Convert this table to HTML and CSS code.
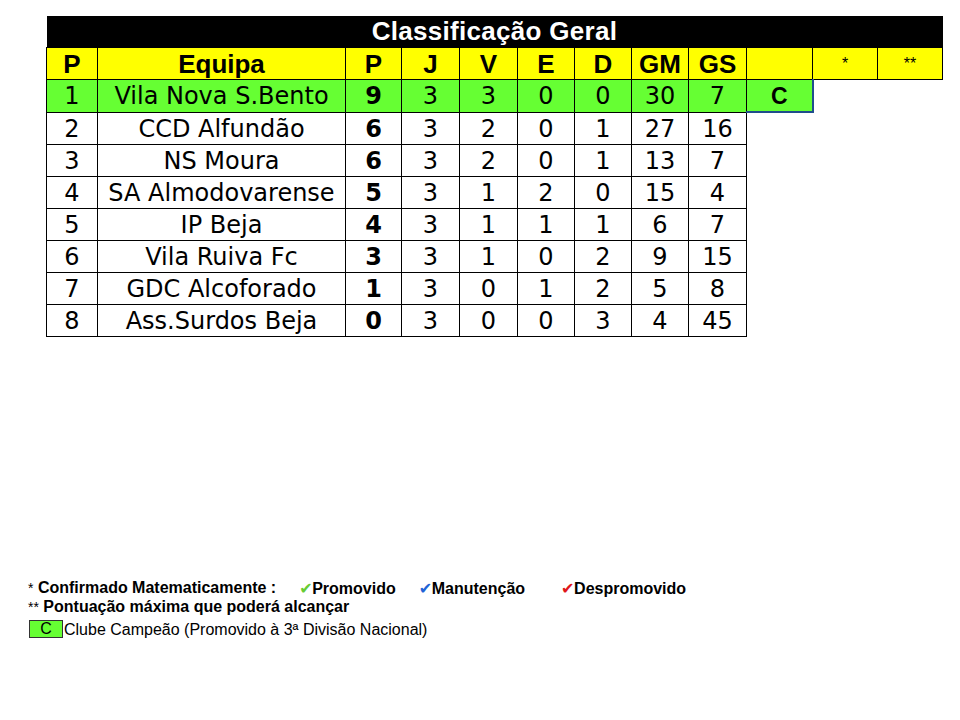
FILE: index.html
```html
<!DOCTYPE html>
<html lang="pt">
<head>
<meta charset="utf-8">
<title>Classificação Geral</title>
<link rel="stylesheet" href="styles.css">
</head>
<body>
<table class="standings">
  <colgroup>
    <col class="c-pos"><col class="c-team"><col class="c-pts"><col class="c-j"><col class="c-v"><col class="c-e"><col class="c-d"><col class="c-gm"><col class="c-gs"><col class="c-flag"><col class="c-star"><col class="c-star2">
  </colgroup>
  <tr class="title-row"><td colspan="12">Classificação Geral</td></tr>
  <tr class="head-row">
    <th>P</th><th>Equipa</th><th>P</th><th>J</th><th>V</th><th>E</th><th>D</th><th>GM</th><th>GS</th><th></th><th class="star">*</th><th class="star">**</th>
  </tr>
  <tr class="row champ">
    <td>1</td><td>Vila Nova S.Bento</td><td class="pts">9</td><td>3</td><td>3</td><td>0</td><td>0</td><td>30</td><td>7</td><td class="flag">C</td><td class="empty"></td><td class="empty"></td>
  </tr>
  <tr class="row"><td>2</td><td>CCD Alfundão</td><td class="pts">6</td><td>3</td><td>2</td><td>0</td><td>1</td><td>27</td><td>16</td><td class="empty"></td><td class="empty"></td><td class="empty"></td></tr>
  <tr class="row"><td>3</td><td>NS Moura</td><td class="pts">6</td><td>3</td><td>2</td><td>0</td><td>1</td><td>13</td><td>7</td><td class="empty"></td><td class="empty"></td><td class="empty"></td></tr>
  <tr class="row"><td>4</td><td>SA Almodovarense</td><td class="pts">5</td><td>3</td><td>1</td><td>2</td><td>0</td><td>15</td><td>4</td><td class="empty"></td><td class="empty"></td><td class="empty"></td></tr>
  <tr class="row"><td>5</td><td>IP Beja</td><td class="pts">4</td><td>3</td><td>1</td><td>1</td><td>1</td><td>6</td><td>7</td><td class="empty"></td><td class="empty"></td><td class="empty"></td></tr>
  <tr class="row"><td>6</td><td>Vila Ruiva Fc</td><td class="pts">3</td><td>3</td><td>1</td><td>0</td><td>2</td><td>9</td><td>15</td><td class="empty"></td><td class="empty"></td><td class="empty"></td></tr>
  <tr class="row"><td>7</td><td>GDC Alcoforado</td><td class="pts">1</td><td>3</td><td>0</td><td>1</td><td>2</td><td>5</td><td>8</td><td class="empty"></td><td class="empty"></td><td class="empty"></td></tr>
  <tr class="row"><td>8</td><td>Ass.Surdos Beja</td><td class="pts">0</td><td>3</td><td>0</td><td>0</td><td>3</td><td>4</td><td>45</td><td class="empty"></td><td class="empty"></td><td class="empty"></td></tr>
</table>

<div class="legend">
  <div class="line bold">
    <span class="lead"><span class="norm">*</span> Confirmado Matematicamente :</span>
    <span class="item"><span class="tick green">✔</span>Promovido</span>
    <span class="item"><span class="tick blue">✔</span>Manutenção</span>
    <span class="item wide"><span class="tick red">✔</span>Despromovido</span>
  </div>
  <div class="line bold"><span class="lead"><span class="norm">**</span> Pontuação máxima que poderá alcançar</span></div>
  <div class="line key"><span class="swatch">C</span>Clube Campeão (Promovido à 3ª Divisão Nacional)</div>
</div>
</body>
</html>
```

FILE: styles.css
```css
html, body {
  margin: 0;
  padding: 0;
  background: #ffffff;
}

body {
  padding: 16px 0 0 46px;
}

.standings {
  border-collapse: collapse;
  table-layout: fixed;
  width: 897px;
  font-family: "DejaVu Sans", Verdana, sans-serif;
}

.c-pos { width: 51px; }
.c-team { width: 248px; }
.c-pts { width: 56px; }
.c-j { width: 58px; }
.c-v { width: 58px; }
.c-e { width: 57px; }
.c-d { width: 57px; }
.c-gm { width: 57px; }
.c-gs { width: 58px; }
.c-flag { width: 66px; }
.c-star { width: 65px; }
.c-star2 { width: 65px; }

.standings td,
.standings th {
  padding: 0;
  text-align: center;
  border: 1px solid #000;
  height: 31px;
  overflow: hidden;
  white-space: nowrap;
}

.title-row td {
  background: #000;
  color: #fff;
  font-family: "Liberation Sans", Arial, sans-serif;
  font-weight: bold;
  font-size: 26px;
  letter-spacing: 0.3px;
  line-height: 31px;
  border: none;
}

.head-row th {
  background: #ffff00;
  font-family: "Liberation Sans", Arial, sans-serif;
  font-weight: bold;
  font-size: 26px;
  line-height: 30px;
  color: #000;
}

.head-row th.star {
  font-size: 16px;
  font-weight: normal;
}

.row td {
  font-size: 24px;
  color: #000;
  line-height: 29px;
  padding-top: 2px;
  height: 29px;
}

.row td.pts {
  font-weight: bold;
}

.champ td {
  background: #66ff33;
}

.champ td.flag {
  font-family: "Liberation Sans", Arial, sans-serif;
  font-weight: bold;
  font-size: 23px;
  border-right: 2px solid #1f4e8c;
  border-bottom: 2px solid #1f4e8c;
}

.standings td.empty {
  border: none;
  background: transparent;
}

.row:not(.champ) td:nth-child(10) {
  border-left: 1px solid #000;
}

.legend {
  margin: 242px 0 0 -18px;
  font-family: "Liberation Sans", Arial, sans-serif;
  font-size: 16px;
  color: #000;
}

.line {
  display: flex;
  align-items: center;
  height: 19px;
  line-height: 19px;
  white-space: nowrap;
}

.bold {
  font-weight: bold;
}

.norm {
  font-weight: normal;
  font-size: 14px;
}

.item {
  display: inline-flex;
  align-items: center;
  margin-left: 23px;
}

.item.wide {
  margin-left: 36px;
}

.tick {
  display: inline-block;
  width: 13px;
  font-family: "DejaVu Sans", sans-serif;
  font-size: 16px;
  font-weight: normal;
}

.tick.green { color: #66cc33; }
.tick.blue { color: #1f64d6; }
.tick.red { color: #e0161b; }

.key {
  margin-top: 3px;
}

.swatch {
  display: inline-block;
  box-sizing: border-box;
  width: 34px;
  height: 18px;
  line-height: 16px;
  margin-left: 1px;
  margin-right: 1px;
  background: #66ff33;
  border: 1px solid #333;
  text-align: center;
  font-size: 16px;
}
```
